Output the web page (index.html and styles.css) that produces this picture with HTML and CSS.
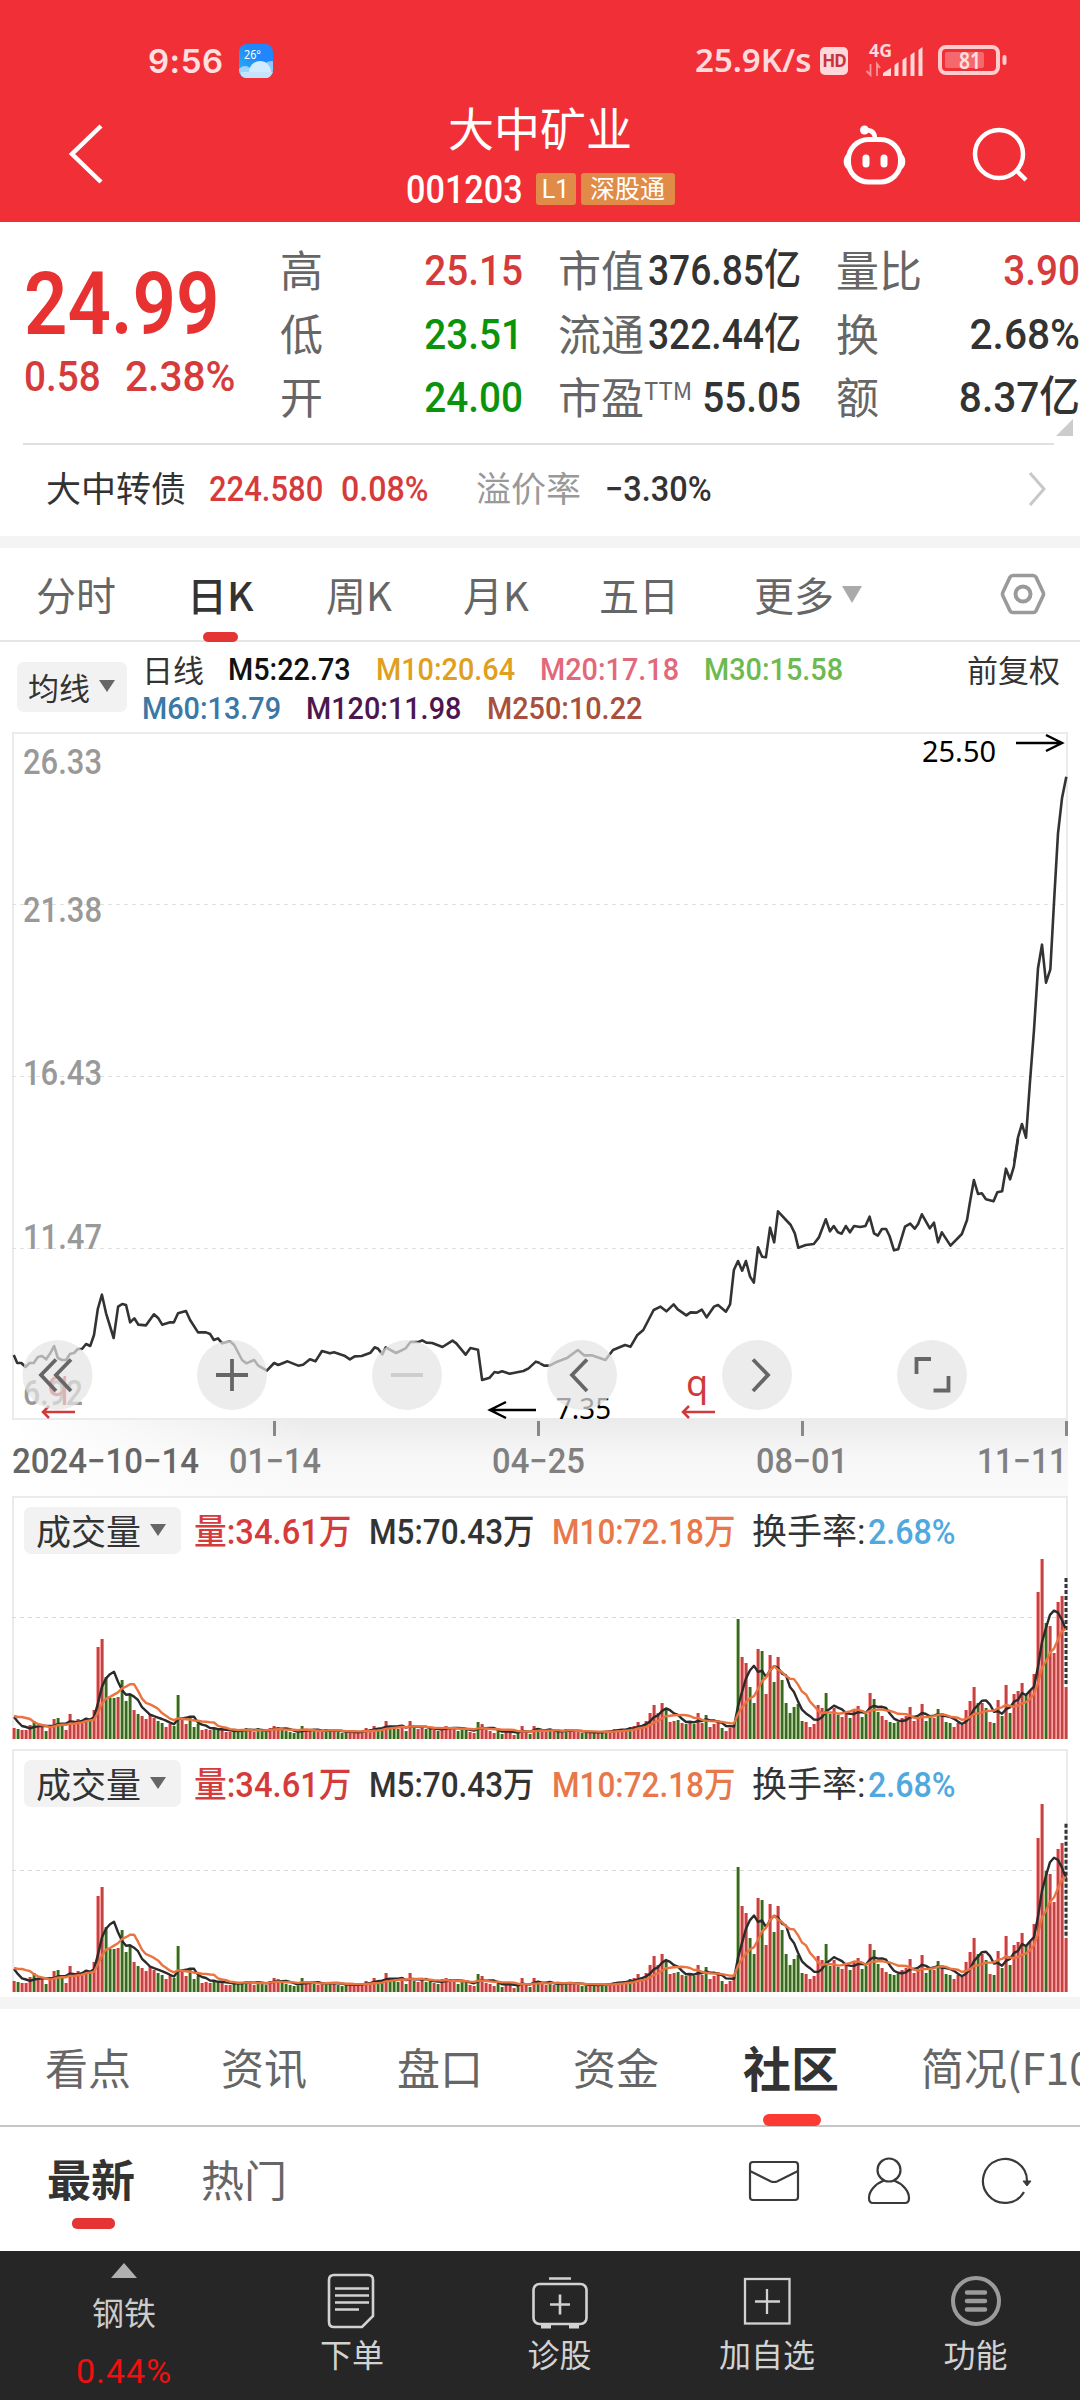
FILE: index.html
```html
<!DOCTYPE html>
<html lang="zh-CN">
<head>
<meta charset="utf-8">
<title>大中矿业 001203</title>
<link rel="stylesheet" href="styles.css">
</head>
<body>
<div class="app">

<header class="header">
  <div class="status">
    <span class="status-time">9:56</span>
    <svg class="status-weather" width="34" height="34" viewBox="0 0 34 34">
      <defs>
        <linearGradient id="sky" x1="0" y1="1" x2="1" y2="0"><stop offset="0" stop-color="#29b4f5"/><stop offset=".6" stop-color="#1f86fb"/></linearGradient>
        <clipPath id="sky-clip"><rect width="34" height="34" rx="8"/></clipPath>
      </defs>
      <g clip-path="url(#sky-clip)">
        <rect width="34" height="34" fill="url(#sky)"/>
        <circle cx="32" cy="26" r="9" fill="#8cc8fd"/>
        <circle cx="6" cy="29" r="7" fill="#9ad4fb"/>
        <circle cx="21" cy="28" r="11" fill="#d3ebff"/>
        <rect x="2" y="28" width="32" height="8" fill="#c4e3fd"/>
      </g>
      <text x="5" y="15" class="weather-text" textLength="17" lengthAdjust="spacingAndGlyphs">26°</text>
    </svg>
    <span class="status-speed">25.9K/s</span>
    <span class="status-hd">HD</span>
    <svg class="status-signal" width="58" height="34" viewBox="0 0 58 34">
      <text x="4" y="13" class="signal-text" textLength="23" lengthAdjust="spacingAndGlyphs">4G</text>
      <path d="M5.500 20v11l-4-4M12 32V20l3 4" fill="none" stroke="#f9979b" stroke-width="1.800"/>
      <path d="M18 32v-3l8-5v8zM29.500 32V21l4-3v14zM37.500 32V16l4-3v19zM45.500 32V11l4-3v24zM53.500 32V6l4-3v29z" fill="#ffd9da"/>
    </svg>
    <svg class="status-battery" width="70" height="32" viewBox="0 0 70 32">
      <rect x="2" y="2" width="58" height="26" rx="6" fill="none" stroke="#ffcccd" stroke-width="4"/>
      <rect x="7" y="7" width="39" height="16" rx="2" fill="#f5686d"/>
      <rect x="64.500" y="10" width="4" height="10" rx="2" fill="#ffcccd"/>
      <text x="21" y="23.500" class="battery-text" textLength="22" lengthAdjust="spacingAndGlyphs">81</text>
    </svg>
  </div>
  <div class="nav">
    <svg class="nav-back" width="40" height="64" viewBox="0 0 40 64"><path d="M35 4 6 32l29 28" fill="none" stroke="#fff" stroke-width="4.500"/></svg>
    <div class="nav-title">
      <h1>大中矿业</h1>
      <div class="nav-code"><span class="code"><span class="num">001203</span></span><span class="badge badge-l1">L1</span><span class="badge badge-sz">深股通</span></div>
    </div>
    <svg class="nav-robot" width="66" height="62" viewBox="0 0 66 62" fill="none" stroke="#fff">
      <rect x="6.500" y="15.500" width="52" height="42.500" rx="20" stroke-width="5"/>
      <path d="M33 15C33 8 29 6 24 6" stroke-width="4.500"/>
      <circle cx="22.500" cy="6" r="4.500" fill="#fff" stroke="none"/>
      <path d="M6 30a8 9 0 0 0 0 15zM59 30a8 9 0 0 1 0 15z" fill="#fff" stroke-width="1.500"/>
      <path d="M24 34v6M42 34v6" stroke-width="7" stroke-linecap="round"/>
    </svg>
    <svg class="nav-search" width="60" height="60" viewBox="0 0 60 60" fill="none" stroke="#fff" stroke-width="4.500"><circle cx="29" cy="29" r="24"/><path d="m46 45 10 10"/></svg>
  </div>
</header>

<section class="quote">
  <div class="price">
    <div class="price-now num">24.99</div>
    <div class="price-change"><span class="num">0.58</span><span class="num wide">2.38%</span></div>
  </div>
  <dl class="stats stats-range">
    <dt>高</dt><dd class="num up">25.15</dd>
    <dt>低</dt><dd class="num down">23.51</dd>
    <dt>开</dt><dd class="num down">24.00</dd>
  </dl>
  <dl class="stats stats-cap">
    <dt>市值</dt><dd class="num">376.85亿</dd>
    <dt>流通</dt><dd class="num">322.44亿</dd>
    <dt>市盈<sup>TTM</sup></dt><dd class="num pe">55.05</dd>
  </dl>
  <dl class="stats stats-turn">
    <dt>量比</dt><dd class="num up">3.90</dd>
    <dt>换</dt><dd class="num wide">2.68%</dd>
    <dt>额</dt><dd class="num wide">8.37亿</dd>
  </dl>
  <i class="expand"></i>
</section>

<section class="bond">
  <span class="bond-name">大中转债</span>
  <span class="bond-price num">224.580</span>
  <span class="bond-rate num">0.08%</span>
  <span class="bond-label">溢价率</span>
  <span class="bond-premium num">−3.30%</span>
  <svg class="bond-more" width="20" height="36" viewBox="0 0 20 36"><path d="M2 2l14 16L2 34" fill="none" stroke="#c8c8c8" stroke-width="3"/></svg>
</section>

<div class="band"></div>

<nav class="periods">
  <span>分时</span><span class="active">日K</span><span>周K</span><span>月K</span><span>五日</span><span class="more">更多<i class="caret"></i></span>
  <svg width="46" height="44" viewBox="0 0 46 44" fill="none" stroke="#9a9a9a"><path d="M13 3.500h20q2 0 3 1.700L43 20q1 2 0 4l-7 14.800q-1 1.700-3 1.700H13q-2 0-3-1.700L3 24q-1-2 0-4l7-14.800q1-1.700 3-1.700z" stroke-width="3.600"/><circle cx="23" cy="22" r="7.500" stroke-width="4"/></svg>
</nav>

<section class="ma">
  <button class="pill pill-ma">均线<i class="caret small"></i></button>
  <div class="ma-lines">
    <div class="ma-row"><span class="ma-name">日线</span><span class="num c5">M5:22.73</span><span class="num c10">M10:20.64</span><span class="num c20">M20:17.18</span><span class="num c30">M30:15.58</span></div>
    <div class="ma-row second"><span class="num c60">M60:13.79</span><span class="num c120">M120:11.98</span><span class="num c250">M250:10.22</span></div>
  </div>
  <span class="adjust">前复权</span>
</section>

<svg class="kline" width="1080" height="766" viewBox="0 730 1080 766">
  <defs>
    <linearGradient id="shade-v" x1="0" y1="0" x2="0" y2="1"><stop offset="0" stop-color="#ebebeb"/><stop offset=".5" stop-color="#f7f7f7"/><stop offset="1" stop-color="#fafafa"/></linearGradient>
    <linearGradient id="shade-h" x1="0" y1="0" x2="1" y2="0"><stop offset="0" stop-color="#fff"/><stop offset=".5" stop-color="#fff" stop-opacity=".5"/><stop offset="1" stop-color="#fff" stop-opacity="0"/></linearGradient>
  </defs>
  <rect x="12" y="1420" width="1056" height="76" fill="url(#shade-v)"/>
  <rect x="12" y="1420" width="300" height="76" fill="url(#shade-h)"/>
  <rect x="13" y="733" width="1054" height="686" fill="#fff" stroke="#ebebeb" stroke-width="2"/>
  <path d="M12 904.500H1066M12 1076.500H1066M12 1248.500H1066" stroke="#dfdfdf" stroke-dasharray="4 4"/>
  <g class="axis-text">
    <text x="23" y="774" textLength="79" lengthAdjust="spacingAndGlyphs">26.33</text>
    <text x="23" y="922" textLength="79" lengthAdjust="spacingAndGlyphs">21.38</text>
    <text x="23" y="1085" textLength="79" lengthAdjust="spacingAndGlyphs">16.43</text>
    <text x="23" y="1249" textLength="79" lengthAdjust="spacingAndGlyphs">11.47</text>
    <text x="23" y="1405" textLength="60" lengthAdjust="spacingAndGlyphs">6.92</text>
  </g>
  <text class="q" x="47" y="1396">q</text>
  <text class="q" x="686" y="1396">q</text>
  <path d="M75 1412H43M49 1406l-6 6 6 6M715 1412H683M689 1406l-6 6 6 6" fill="none" stroke="#cf3b3b" stroke-width="2.500"/>
  <g fill="none" stroke="#333" class="price-line">
    <path transform="translate(0 1200) scale(.34437 .33333)" d="M40 465 50 489 62 489 74 501 86 489 98 489 110 471 122 468 134 478 146 460 157 438 168 474 180 480 192 480 203 462 215 459 226 447 238 447 250 432 262 438 273 405 284 327 296 284 308 340 330 414 343 320 355 312 366 315 378 367 390 355 402 374 424 376 447 343 460 355 471 374 494 367 505 367 517 340 540 333 552 360 575 397 598 397 610 402 621 420 633 415 645 430 668 424 680 435 703 480 715 490 738 480 750 497 775 512 796 489 808 495 835 484 866 497 880 494 900 478 916 484 935 453 958 460 970 457 1000 467 1016 478 1030 469 1050 468 1076 458 1088 442 1098 446 1110 463 1120 442 1150 459 1178 445 1192 426 1215 426 1226 421 1238 428 1255 429 1285 441 1314 422 1325 430 1352 464 1366 444 1388 449 1400 540 1422 533 1436 516 1446 518 1458 514 1480 521 1520 513 1535 505 1556 485 1568 489"/>
    <path transform="translate(540 1150) scale(.34437 .33333)" d="M0 640 12 647 28 647 50 635 80 623 110 600 128 616 150 616 190 630 212 600 247 585 263 590 282 556 300 540 330 480 350 470 367 484 388 463 400 478 425 496 437 487 455 488 470 479 484 502 505 470 517 465 540 485 552 463 563 360 575 333 587 362 598 333 610 380 621 398 633 292 645 320 656 322 668 233 680 277 691 184 728 225 740 250 750 293 772 285 795 282 810 262 830 208 842 244 853 228 865 247 876 251 888 228 900 247 912 228 930 231 945 228 957 200 970 250 981 257 993 237 1005 237 1015 258 1028 301 1040 298 1060 230 1075 221 1088 236 1098 222 1109 193 1132 235 1144 218 1156 277 1167 247 1192 287 1225 252 1240 210 1248 160 1260 90 1272 132 1283 130 1295 148 1317 154 1328 127 1342 124 1353 56 1365 88 1376 50 1388 -33"/>
    <path transform="translate(760 720) scale(.33333)" d="M763 1325 774 1252 786 1212 798 1253 810 1085 822 930 834 745 846 674 858 788 871 748 883 530 894 340 906 235 919 170"/>
  </g>
  <g class="mark-text">
    <text x="922" y="762" textLength="74" lengthAdjust="spacingAndGlyphs">25.50</text>
    <text x="556" y="1419" textLength="55" lengthAdjust="spacingAndGlyphs">7.35</text>
  </g>
  <path d="M1016 743H1061M1046 735l16 8-16 8M536 1410H491M506 1402l-16 8 16 8" fill="none" stroke="#000" stroke-width="2.500"/>
  <path d="M274.500 1421v15M538.500 1421v15M802.500 1421v15M1066.500 1421v15" stroke="#888" stroke-width="3"/>
  <g class="axis-text date">
    <text class="first" x="12" y="1473" textLength="187" lengthAdjust="spacingAndGlyphs">2024−10−14</text>
    <text x="229" y="1473" textLength="92" lengthAdjust="spacingAndGlyphs">01−14</text>
    <text x="492" y="1473" textLength="93" lengthAdjust="spacingAndGlyphs">04−25</text>
    <text x="756" y="1473" textLength="92" lengthAdjust="spacingAndGlyphs">08−01</text>
    <text x="977" y="1473" textLength="90" lengthAdjust="spacingAndGlyphs">11−11</text>
  </g>
  <g fill="rgba(228,228,228,.706)">
    <circle cx="57.500" cy="1375" r="35"/><circle cx="232" cy="1375" r="35"/><circle cx="407" cy="1375" r="35"/><circle cx="582" cy="1375" r="35"/><circle cx="757" cy="1375" r="35"/><circle cx="932" cy="1375" r="35"/>
  </g>
  <g fill="none" stroke="#666" stroke-width="3.800">
    <path d="M56 1359.500l-15 15.500 15 16M71 1359.500l-15 15.500 15 16M216 1375h32M232 1359v32"/>
    <path d="M391 1375h32" stroke="#ccc"/>
    <path d="M587 1359.500l-15 15.500 15 16M753 1359.500l15 15.500-15 16M916.500 1374v-15H931M933.500 1390.500h15V1376"/>
  </g>
</svg>

<section class="volume">
  <div class="volume-head"><button class="pill pill-vol">成交量<i class="caret small"></i></button><span class="num v1">量:34.61万</span><span class="num v2">M5:70.43万</span><span class="num v3">M10:72.18万</span><span class="v4">换手率:</span><span class="num v5">2.68%</span></div>
  <svg class="bars" width="1056" height="187" data-scale="1"></svg>
</section>
<section class="volume">
  <div class="volume-head"><button class="pill pill-vol">成交量<i class="caret small"></i></button><span class="num v1">量:34.61万</span><span class="num v2">M5:70.43万</span><span class="num v3">M10:72.18万</span><span class="v4">换手率:</span><span class="num v5">2.68%</span></div>
  <svg class="bars" width="1056" height="187" data-scale="1.045"></svg>
</section>

<div class="band band-low"></div>

<nav class="sections"><span>看点</span><span>资讯</span><span>盘口</span><span>资金</span><span class="active">社区</span><span>简况(F10)</span></nav>

<div class="feed">
  <span class="active">最新</span><span class="hot">热门</span>
  <svg class="ic-mail" width="50" height="50" viewBox="0 0 50 50" fill="none" stroke="#3a3a3a" stroke-width="2.200"><rect x="1" y="6" width="48" height="38" rx="3"/><path d="M1 15l21 10.500q3 1 6 0L49 15"/></svg>
  <svg class="ic-user" width="50" height="50" viewBox="0 0 50 50" fill="none" stroke="#3a3a3a" stroke-width="2.200"><circle cx="25" cy="14" r="11.500"/><path d="M20 24.500C11 28 5 35 5 42q0 5 4 5h32q4 0 4-5c0-7-6-14-15-17.500"/></svg>
  <svg class="ic-refresh" width="50" height="50" viewBox="0 0 50 50" fill="none" stroke="#3a3a3a" stroke-width="2.200"><path d="M43 36A22 22 0 1 1 46 25"/><path d="M42 25h8l-4 5z" fill="#3a3a3a" stroke-width="1"/></svg>
</div>

<footer class="dock">
  <div class="dock-index"><i class="tri"></i><span>钢铁</span><b>0.44%</b></div>
  <div class="dock-item"><svg width="60" height="58" viewBox="0 0 60 58" fill="none" stroke="#d2d2d2" stroke-width="2.600"><path d="M12 4h34q5 0 5 5v36L40 56H12q-5 0-5-5V9q0-5 5-5z"/><path d="M13 17.500h34M13 24.500h34M13 31.500h34M13 38.500h24"/></svg><span>下单</span></div>
  <div class="dock-item"><svg width="60" height="58" viewBox="0 0 60 58" fill="none" stroke="#d2d2d2" stroke-width="2.600"><rect x="3.500" y="13" width="53" height="40" rx="6"/><path d="M19 7.500h22M30 23.500v20M20 33.500h20"/><path d="M11 55.500h10M39 55.500h10" stroke-width="4"/></svg><span>诊股</span></div>
  <div class="dock-item"><svg width="60" height="58" viewBox="0 0 60 58" fill="none" stroke="#d2d2d2" stroke-width="2.300"><rect x="8" y="8" width="44.500" height="44.500"/><path d="M30 18v25M18 30.500h25"/></svg><span>加自选</span></div>
  <div class="dock-item"><svg width="60" height="58" viewBox="0 0 60 58" fill="none" stroke="#9b9b9b"><circle cx="30" cy="30" r="23" stroke-width="4"/><path d="M21 21.500h18M21 30h18M21 38.500h18" stroke-width="4.500" stroke-linecap="round"/></svg><span>功能</span></div>
</footer>

</div>
<script src="chart.js"></script>
</body>
</html>
```
FILE: styles.css
```css
* { box-sizing: border-box; }
body { margin: 0; background: #fff; color: #333; font-family: Roboto, "Noto Sans CJK SC", sans-serif; }
.app { width: 1080px; height: 2400px; overflow: hidden; display: flex; flex-direction: column; }
.app > * { flex: none; }
svg { display: block; flex: none; overflow: visible; }
h1, dl, dd, dt { margin: 0; font-weight: 400; }
button { border: 0; padding: 0; color: #333; font: inherit; }
/* Figures are set in a slightly condensed cut. */
.num { display: block; flex: none; font-family: Roboto, "Noto Sans CJK SC", sans-serif; font-weight: 500; white-space: nowrap; transform: scaleX(.9); transform-origin: left center; }
.num.wide { transform: scaleX(.945); }
.up { color: #d63b3b; }
.down { color: #0b930b; }

.header { height: 222px; background: #f12f37; color: #fff; }
.status { height: 85px; padding: 37px 0 0 148px; display: flex; align-items: center; }
.status > * { flex: none; }
.status-time { width: 91px; font: 600 33px Inter, sans-serif; color: #ffe0e0; letter-spacing: .5px; }
.status-speed { margin-left: 422px; width: 125px; font: 600 33px/44px "Noto Sans", sans-serif; color: #ffdadb; white-space: nowrap; position: relative; top: -1px; }
.status-hd { width: 28px; height: 28px; border-radius: 5px; background: #ffd9da; color: #c9343b; font: 700 17px/28px "Noto Sans", sans-serif; text-align: center; letter-spacing: -1px; }
.status-signal { margin-left: 17px; }
.status-battery { margin-left: 15px; }
.weather-text { font: 13px "Noto Sans", sans-serif; fill: #fff; }
.signal-text { font: 700 17px "Noto Sans", sans-serif; fill: #ffd9da; }
.battery-text { font: 600 23px "Noto Sans", sans-serif; fill: #ffe0e0; }
.nav { height: 137px; display: grid; grid-template-columns: 66px 300px 348px 127px 129px 1fr; }
.nav-back { grid-column: 2; margin-top: 37px; }
.nav-title { grid-column: 3; display: flex; flex-direction: column; align-items: center; }
.nav h1 { margin-top: 15px; font-size: 46px; line-height: 52px; height: 52px; font-family: "Noto Sans CJK SC"; }
.nav-code { display: flex; align-items: center; height: 32px; margin-top: 21px; }
.code { width: 130px; font-size: 38px; line-height: 32px; position: relative; top: 1px; }
.badge { height: 32px; border-radius: 3px; background: #e18b49; color: #fff; font-size: 25px; line-height: 33px; text-align: center; }
.badge-l1 { width: 40px; margin-right: 5px; }
.badge-sz { width: 94px; }
.nav-robot { margin-top: 39px; margin-left: 128px; }
.nav-search { margin-top: 40px; margin-left: 129px; }

.quote { height: 222px; display: flex; position: relative; }
.quote::after { content: ""; position: absolute; left: 23px; right: 26px; bottom: -1px; height: 2px; background: #e0e0e0; }
.price { width: 280px; padding: 42px 0 0 24px; color: #d63b3b; }
.price-now { font-size: 88px; line-height: 80px; height: 80px; font-weight: 600; color: #e83232; transform: scaleX(.865); }
.price-change { display: grid; grid-template-columns: 101px 1fr; margin-top: 10px; font-size: 43px; line-height: 44px; }
.stats { display: grid; grid-auto-rows: 63.500px; padding-top: 17px; line-height: 63px; font-size: 43px; }
.stats dt { font-size: 43px; color: #666; line-height: 58px; font-family: "Noto Sans CJK SC"; white-space: nowrap; }
.stats dd { text-align: right; transform-origin: right center; }
.stats-range { grid-template-columns: 60px 183px; }
.stats-cap { grid-template-columns: 66px 177px; margin-left: 35px; }
.stats-cap dd { transform: scaleX(.865); }
.stats-cap .pe { transform: scaleX(.9); }
.stats-turn { grid-template-columns: 90px 154px; margin-left: 35px; }
.stats sup { display: inline-block; font-size: 24px; line-height: 20px; vertical-align: 14px; }
.expand { position: absolute; left: 1056px; top: 197px; border-left: 17px solid transparent; border-bottom: 17px solid #ccc; }

.bond { height: 92px; display: flex; align-items: center; padding-left: 46px; font-size: 35px; line-height: 50px; white-space: nowrap; }
.bond > :not(.num):not(svg) { font-family: "Noto Sans CJK SC"; position: relative; top: -3px; }
.bond-name { width: 163px; }
.bond-price { width: 132px; color: #d63b3b; transform: scaleX(.885); }
.bond-rate { width: 135px; color: #d63b3b; transform: scaleX(.92); }
.bond-label { width: 129px; color: #999; }
.bond-premium { width: 423px; transform: scaleX(.93); }
.bond-more { position: relative; top: -1px; }

.band { height: 12px; background: #f4f4f4; }

.periods { height: 94px; display: grid; grid-template-columns: 151px 139px 137px 136px 155px 246px 46px; padding: 0 0 0 36px; border-bottom: 2px solid #e6e6e6; align-items: center; font: 40px/60px "Noto Sans CJK SC", sans-serif; color: #666; }
.periods .active { color: #333; font-weight: 500; position: relative; }
.periods .active::after { content: ""; position: absolute; left: 16px; top: 68px; width: 35px; height: 10px; border-radius: 5px; background: #e53434; }
.more { display: flex; align-items: center; }
.caret { display: inline-block; margin-left: 8px; border: 10px solid transparent; border-top: 17px solid #aaa; border-bottom: 0; }

.ma { height: 88px; display: flex; padding: 8px 0 0 17px; font-size: 32px; }
.pill { display: flex; flex: none; align-items: center; background: #f2f2f2; border-radius: 7px; font-family: "Noto Sans CJK SC", sans-serif; }
.pill-ma { width: 110px; height: 50px; margin-top: 12px; padding: 0 0 2px 11px; font-size: 31px; }
.caret.small { border-width: 12px 8px 0; border-top-color: #666; margin-left: 9px; }
.ma-lines { width: 840px; flex: none; padding-left: 15px; }
.ma-row { height: 39px; line-height: 39px; display: grid; grid-template-columns: 86px 148px 164px 164px 164px; }
.ma-row.second { grid-template-columns: 164px 181px 181px; }
.ma-name, .adjust { font: 31px/37px "Noto Sans CJK SC", sans-serif; white-space: nowrap; }
.c5 { color: #111; } .c10 { color: #dfa01e; } .c20 { color: #e2687b; } .c30 { color: #6dba50; }
.c60 { color: #3a78a5; } .c120 { color: #4d164f; } .c250 { color: #a84f3e; }

.axis-text { font: 500 35px Roboto, sans-serif; fill: #999; }
.axis-text.date { fill: #808080; }
.axis-text .first { fill: #666; }
.mark-text { font: 29px "Noto Sans", sans-serif; fill: #000; }
.q { font: 36px "Noto Sans", sans-serif; fill: #cf3b3b; }
.price-line path { stroke-width: 2.600px; vector-effect: non-scaling-stroke; stroke-linejoin: round; }

.volume { width: 1056px; height: 243px; margin-left: 12px; margin-bottom: 10px; border: 2px solid #ebebeb; border-bottom: 0; }
.volume-head { height: 57px; display: grid; grid-template-columns: 170px 175px 183px 201px 115px 100px; align-items: center; padding: 8px 0 0 10px; font-size: 35px; line-height: 48px; white-space: nowrap; }
.volume-head > span { position: relative; top: 2px; }
.pill-vol { width: 157px; height: 47px; padding: 0 0 1px 12px; font-size: 35px; }
.v1 { color: #d63b3b; transform: scaleX(.935); }
.v3 { color: #e8784a; }
.v4 { left: -1px; }
.v5 { color: #4fa8de; transform: scaleX(.92); }
.bars { margin-left: -2px; margin-top: -1px; }
.band-low { margin-top: -5px; }

.sections { height: 118px; border-bottom: 2px solid #c6c6c6; display: grid; grid-template-columns: repeat(4, 176px) 172px 200px; padding: 0 0 2px 45px; align-items: center; font: 43px/60px "Noto Sans CJK SC", sans-serif; color: #666; white-space: nowrap; }
.sections .active { font-size: 48px; font-weight: 700; color: #333; position: relative; margin-left: -6px; }
.sections .active::after { content: ""; position: absolute; left: 20px; top: 78px; width: 58px; height: 12px; border-radius: 6px; background: #fb3b33; }

.feed { height: 124px; display: flex; align-items: center; padding: 0 0 16px 47px; font: 43px/60px "Noto Sans CJK SC", sans-serif; color: #666; }
.feed span { position: relative; top: -3px; }
.feed .active { width: 154px; font-size: 44px; font-weight: 700; color: #333; }
.feed .active::after { content: ""; position: absolute; left: 25px; top: 70px; width: 43px; height: 11px; border-radius: 5px; background: #e53434; }
.hot { width: 548px; }
.ic-user { margin-left: 65px; }
.ic-refresh { margin-left: 67px; }

.dock { height: 149px; background: #262626; display: grid; grid-template-columns: 248px 208px 207px 208px 209px; color: #d2d2d2; font: 32px/44px "Noto Sans CJK SC", sans-serif; text-align: center; }
.dock-index { display: flex; flex-direction: column; align-items: center; color: #ccc; }
.tri { margin: 12px 0 11px; border: 13px solid transparent; border-bottom: 15px solid #b0b0b0; border-top: 0; }
.dock-index b { margin-top: 18px; font: 34px/40px Roboto, sans-serif; letter-spacing: 1px; color: #f01010; }
.dock-item { display: flex; flex-direction: column; align-items: center; }
.dock-item svg { margin-top: 20px; }
.dock-item span { margin-top: 2px; }
```
FILE: chart.js
```js
// Daily volume, one value per trading day, in pixels above the baseline.
const volume = [
  11, 10, 9, 9, 14, 18, 13, 12, 8, 14, 20, 21, 13, 9, 25, 18, 20, 18, 21, 20, 29, 92, 100, 62, 41, 41, 42, 59, 38, 44,
  29, 25, 23, 20, 25, 21, 18, 16, 12, 15, 13, 44, 19, 15, 21, 12, 15, 9, 10, 9, 11, 10, 9, 7, 7, 8, 9, 10, 11, 8,
  7, 11, 8, 7, 11, 13, 12, 9, 8, 7, 6, 6, 13, 10, 9, 8, 7, 8, 10, 9, 8, 7, 6, 7, 8, 7, 6, 8, 11, 10,
  13, 9, 11, 18, 12, 13, 10, 14, 8, 18, 11, 10, 13, 10, 10, 9, 8, 12, 13, 12, 10, 8, 11, 10, 7, 6, 17, 15, 9, 8,
  6, 9, 5, 10, 7, 4, 6, 13, 8, 5, 13, 11, 8, 7, 9, 7, 8, 7, 10, 9, 8, 7, 6, 6, 8, 7, 6, 7, 8, 9,
  10, 10, 9, 10, 12, 13, 17, 14, 18, 26, 34, 26, 36, 31, 17, 18, 19, 16, 15, 18, 15, 26, 16, 24, 12, 15, 19, 11, 8, 11,
  14, 120, 82, 76, 52, 36, 90, 88, 45, 84, 57, 82, 59, 36, 26, 32, 35, 18, 17, 12, 15, 34, 31, 46, 25, 31, 24, 22, 28, 21,
  30, 33, 22, 25, 46, 40, 27, 23, 19, 17, 16, 17, 21, 23, 32, 18, 22, 35, 18, 21, 21, 30, 26, 17, 16, 12, 16, 14, 29, 38,
  52, 36, 36, 31, 17, 16, 39, 23, 54, 26, 45, 48, 56, 45, 48, 65, 147, 180, 116, 113, 86, 137, 143, 52
];
// Days that closed below the open; all others closed above it.
const falling = new Set([
  1, 5, 8, 11, 12, 19, 23, 24, 25, 27, 28, 29, 31, 36, 37, 40, 41, 44, 45, 46, 50, 51, 55, 56, 57, 58, 61, 62, 63,
  67, 68, 69, 70, 71, 72, 75, 78, 79, 81, 82, 83, 91, 92, 94, 95, 96, 98, 100, 103, 104, 106, 111, 112, 113, 116, 121,
  122, 126, 129, 131, 134, 136, 138, 142, 143, 145, 147, 148, 154, 163, 166, 168, 170, 173, 177, 181, 184, 185, 187,
  190, 192, 193, 194, 195, 196, 197, 203, 204, 206, 209, 212, 213, 215, 216, 219, 220, 221, 228, 229, 231, 233, 234,
  241, 243, 245, 247, 249, 253, 258
]);

const NS = "http://www.w3.org/2000/svg";
const base = 185;

function add(svg, attrs) {
  const node = document.createElementNS(NS, "path");
  for (const key in attrs) node.setAttribute(key, attrs[key]);
  svg.appendChild(node);
}

function average(days) {
  return volume.map((_, i) => {
    const part = volume.slice(Math.max(0, i - days + 1), i + 1);
    return part.reduce((a, b) => a + b, 0) / part.length;
  });
}

function line(values, scale) {
  return "M" + values.map((v, i) => (4 * i + 2) + " " + (base - v * scale).toFixed(1)).join("L");
}

// Days before the window and the projected last day shape the ends of the averages.
const avg5 = average(5);
const avg10 = average(10);
[22, 17, 13, 12].forEach((v, i) => { avg5[i] = v; });
[23, 22, 22, 21, 20, 17, 15, 14, 13].forEach((v, i) => { avg10[i] = v; });
avg5[263] = 109;
avg10[263] = 110;

document.querySelectorAll(".bars").forEach((svg) => {
  const scale = Number(svg.dataset.scale);
  add(svg, { d: "M0 63.5H1054", stroke: "#dadada", "stroke-dasharray": "4 4" });
  let up = "", upEdge = "", down = "", downEdge = "";
  volume.forEach((value, i) => {
    const v = Math.round(value * scale);
    const core = `M${4 * i + 1} ${base}v${-v}h2.300v${v}z`;
    const edge = `M${4 * i} ${base}v${-v}h4v${v}z`;
    if (falling.has(i)) { down += core; downEdge += edge; } else { up += core; upEdge += edge; }
  });
  add(svg, { d: upEdge, fill: "#ff9f9f" });
  add(svg, { d: downEdge, fill: "#b0d098" });
  add(svg, { d: up, fill: "#ba4646" });
  add(svg, { d: down, fill: "#3c6627" });
  add(svg, { d: `M1054 ${base - 161 * scale}V${base - 53 * scale}`, stroke: "#333", "stroke-width": 3, "stroke-dasharray": "4 2" });
  add(svg, { d: line(avg5, scale), fill: "none", stroke: "#2b2b2b", "stroke-width": 2.4, "stroke-linejoin": "round" });
  add(svg, { d: line(avg10, scale), fill: "none", stroke: "#ea7340", "stroke-width": 2.4, "stroke-linejoin": "round" });
});
```
